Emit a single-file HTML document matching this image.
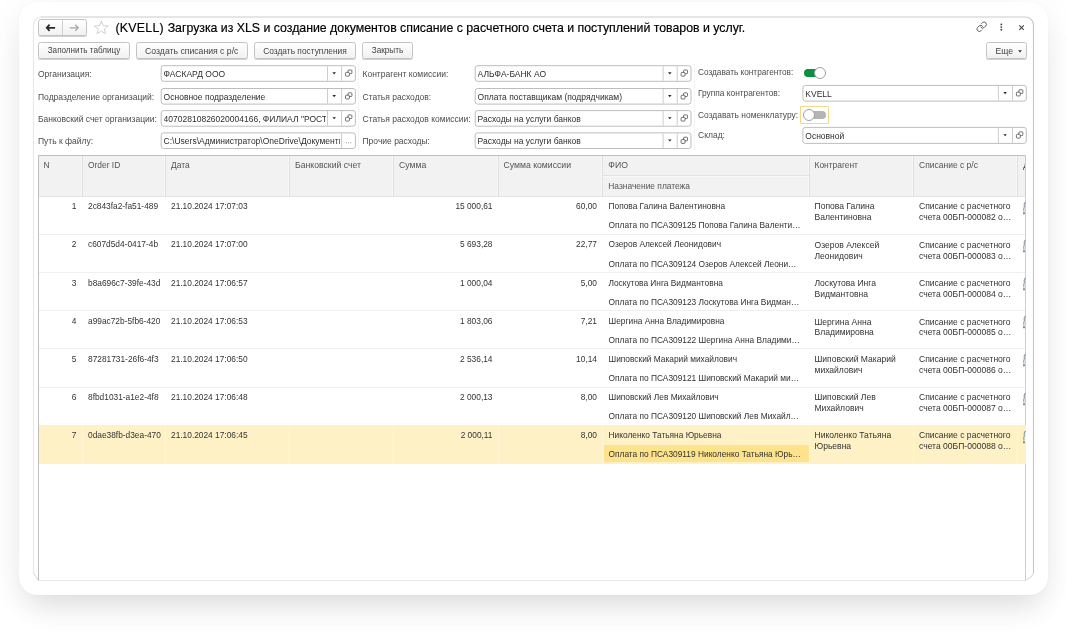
<!DOCTYPE html>
<html lang="ru"><head><meta charset="utf-8"><title>(KVELL) Загрузка из XLS</title>
<style>
html,body{margin:0;padding:0;background:#fff;}
body{width:1067px;height:631px;position:relative;overflow:hidden;font-family:"Liberation Sans",sans-serif;font-size:8.5px;color:#3a3a3a;}
#card{position:absolute;left:19px;top:1.5px;width:1029px;height:593.5px;border-radius:18px;background:#fff;box-shadow:0 19px 30px -9px rgba(0,0,0,0.10),0 6px 36px rgba(0,0,0,0.06),0 0 1.5px rgba(0,0,0,0.06);}
.t{position:absolute;white-space:nowrap;line-height:10px;height:10px;}
.lbl{color:#4c4c4c;}
.val{color:#2e2e2e;}
.btn{position:absolute;box-sizing:border-box;border:1px solid #c3c3c3;border-radius:2.5px;background:linear-gradient(#ffffff,#f1f1f1);box-shadow:0 1px 0.5px rgba(0,0,0,0.18);text-align:center;color:#444;line-height:16.4px;white-space:nowrap;font-size:8.45px;}
.dd{position:absolute;width:4px;height:3px;}
.hd{position:absolute;background:#f2f2f2;}
.hl{position:absolute;background:#dedede;}
.rl{position:absolute;left:39px;width:986px;height:1px;background:#efefef;}
.c{position:absolute;white-space:nowrap;line-height:10px;color:#333;font-size:8.35px;}
.h{position:absolute;white-space:nowrap;line-height:10px;color:#555;font-size:8.42px;}
.r{text-align:right;}
.w{font-size:8.55px;}
</style></head><body>
<div id="card"></div>
<svg style="position:absolute;left:0;top:0;" width="1067" height="631" viewBox="0 0 1067 631"><g fill="none">
<path d="M33.5 573 V25 a8 8 0 0 1 8 -8" stroke="#e8e8e8" stroke-width="1.2"/>
<path d="M41 17 H1025.5" stroke="#dddddd" stroke-width="1.6"/>
<path d="M1025.5 17 a8 8 0 0 1 8 8 V573" stroke="#c6c6c6" stroke-width="1.1"/>
<path d="M33.5 573 L38 580" stroke="#d8d8d8" stroke-width="1"/>
<path d="M1033.5 573 Q1032.5 577 1026.5 580" stroke="#d4d4d4" stroke-width="1"/>
</g></svg>
<div id="layer" style="position:absolute;left:0;top:0;width:1067px;height:631px;will-change:transform;filter:blur(0.35px);">

<div class="btn" style="left:38px;top:19px;width:49px;height:17px;"></div>
<div style="position:absolute;left:62px;top:20px;width:1px;height:15px;background:#d0d0d0;"></div>
<svg style="position:absolute;left:45px;top:23px;" width="12" height="10" viewBox="0 0 12 10"><path d="M4.6 1.7 L1.7 4.8 L4.6 7.9 M2 4.8 H10.1" fill="none" stroke="#2a2a2a" stroke-width="1.7"/></svg>
<svg style="position:absolute;left:68px;top:23px;" width="12" height="10" viewBox="0 0 12 10"><path d="M7.3 1.8 L10.2 4.8 L7.3 7.8 M1.6 4.8 H10" fill="none" stroke="#a8a8a8" stroke-width="1.3"/></svg>
<svg style="position:absolute;left:93px;top:20px;" width="17" height="15" viewBox="0 0 17 15"><path d="M8.3 1.2 L10.1 5.6 L15.2 6 L11.3 9.1 L12.6 13.7 L8.3 11.2 L4 13.7 L5.3 9.1 L1.4 6 L6.5 5.6 Z" fill="#fff" stroke="#c4c4c4" stroke-width="0.8" stroke-linejoin="miter"/></svg>
<div class="t" style="left:115.5px;top:21px;font-size:12.35px;line-height:15px;height:15px;color:#000;-webkit-text-stroke:0.18px #000;letter-spacing:-0.018px;"><span style="position:static;letter-spacing:0.26px;">(KVELL) </span>Загрузка из XLS и создание документов списание с расчетного счета и поступлений товаров и услуг.</div>
<svg style="position:absolute;left:975.9px;top:21.4px;" width="11.4" height="11.4" viewBox="0 0 24 24"><g fill="none" stroke="#505050" stroke-width="1.9" stroke-linecap="round" stroke-linejoin="round"><path d="M10 13a5 5 0 0 0 7.54.54l3-3a5 5 0 0 0-7.07-7.07l-1.72 1.71"/><path d="M14 11a5 5 0 0 0-7.54-.54l-3 3a5 5 0 0 0 7.07 7.07l1.71-1.71"/></g></svg>
<svg style="position:absolute;left:999px;top:22px;" width="5" height="10" viewBox="0 0 5 10"><g fill="#484848"><circle cx="2.3" cy="2.4" r="0.95"/><circle cx="2.3" cy="5.1" r="0.95"/><circle cx="2.3" cy="7.8" r="0.95"/></g></svg>
<svg style="position:absolute;left:1018px;top:23.6px;" width="7" height="7" viewBox="0 0 7 7"><path d="M1.3 1.3 L5.8 5.8 M5.8 1.3 L1.3 5.8" stroke="#444" stroke-width="1.1" fill="none"/></svg>
<div class="btn" style="left:38px;top:42px;width:92px;height:17px;font-size:8.15px;">Заполнить таблицу</div>
<div class="btn" style="left:136px;top:42px;width:111.5px;height:17px;font-size:8.66px;">Создать списания с р/с</div>
<div class="btn" style="left:254px;top:42px;width:102px;height:17px;font-size:8.4px;">Создать поступления</div>
<div class="btn" style="left:362px;top:42px;width:51px;height:17px;font-size:8.2px;">Закрыть</div>
<div class="btn" style="left:986px;top:42px;width:40.5px;height:17px;text-align:left;padding-left:8.5px;font-size:8.64px;">Еще</div>
<svg class="dd" style="left:1017.8px;top:50px;" viewBox="0 0 4 3"><path d="M0.1 0.2 H3.9 L2 2.4 Z" fill="#2a2a2a"/></svg>
<div class="t lbl" style="left:38px;top:68.70px;">Организация:</div>
<svg style="position:absolute;left:159px;top:63px;" width="200" height="22" viewBox="0 0 200 22"><rect x="2.20" y="2.70" width="194.20" height="15.60" rx="2.4" fill="#fff" stroke="#bdbdbd" stroke-width="1"/><path d="M168.50 3.20 V17.80 M182.60 3.20 V17.80" stroke="#cdcdcd" stroke-width="1" fill="none"/><path d="M173.40 9.30 H177.00 L175.20 11.40 Z" fill="#2a2a2a"/><g fill="#fff" stroke="#4a4a4a" stroke-width="0.78"><rect x="189.00" y="7.00" width="3.9" height="3.7" rx="0.8"/><rect x="186.50" y="9.40" width="3.9" height="3.8" rx="0.9"/></g></svg>
<div class="t val" style="left:163.60px;top:68.80px;width:162.6px;overflow:hidden;font-size:8.5px;">ФАСКАРД ООО</div>
<div class="t lbl" style="left:362.5px;top:68.70px;">Контрагент комиссии:</div>
<svg style="position:absolute;left:473px;top:63px;" width="222" height="22" viewBox="0 0 222 22"><rect x="2.20" y="2.70" width="215.80" height="15.60" rx="2.4" fill="#fff" stroke="#bdbdbd" stroke-width="1"/><path d="M190.10 3.20 V17.80 M204.20 3.20 V17.80" stroke="#cdcdcd" stroke-width="1" fill="none"/><path d="M195.00 9.30 H198.60 L196.80 11.40 Z" fill="#2a2a2a"/><g fill="#fff" stroke="#4a4a4a" stroke-width="0.78"><rect x="210.60" y="7.00" width="3.9" height="3.7" rx="0.8"/><rect x="208.10" y="9.40" width="3.9" height="3.8" rx="0.9"/></g></svg>
<div class="t val" style="left:477.60px;top:68.80px;width:184.2px;overflow:hidden;font-size:8.5px;">АЛЬФА-БАНК АО</div>
<div class="t lbl" style="left:38px;top:91.50px;">Подразделение организаций:</div>
<svg style="position:absolute;left:159px;top:86px;" width="200" height="22" viewBox="0 0 200 22"><rect x="2.20" y="2.50" width="194.20" height="15.60" rx="2.4" fill="#fff" stroke="#bdbdbd" stroke-width="1"/><path d="M168.50 3.00 V17.60 M182.60 3.00 V17.60" stroke="#cdcdcd" stroke-width="1" fill="none"/><path d="M173.40 9.10 H177.00 L175.20 11.20 Z" fill="#2a2a2a"/><g fill="#fff" stroke="#4a4a4a" stroke-width="0.78"><rect x="189.00" y="6.80" width="3.9" height="3.7" rx="0.8"/><rect x="186.50" y="9.20" width="3.9" height="3.8" rx="0.9"/></g></svg>
<div class="t val" style="left:163.60px;top:91.60px;width:162.6px;overflow:hidden;font-size:8.5px;">Основное подразделение</div>
<div class="t lbl" style="left:362.5px;top:91.50px;">Статья расходов:</div>
<svg style="position:absolute;left:473px;top:86px;" width="222" height="22" viewBox="0 0 222 22"><rect x="2.20" y="2.50" width="215.80" height="15.60" rx="2.4" fill="#fff" stroke="#bdbdbd" stroke-width="1"/><path d="M190.10 3.00 V17.60 M204.20 3.00 V17.60" stroke="#cdcdcd" stroke-width="1" fill="none"/><path d="M195.00 9.10 H198.60 L196.80 11.20 Z" fill="#2a2a2a"/><g fill="#fff" stroke="#4a4a4a" stroke-width="0.78"><rect x="210.60" y="6.80" width="3.9" height="3.7" rx="0.8"/><rect x="208.10" y="9.20" width="3.9" height="3.8" rx="0.9"/></g></svg>
<div class="t val" style="left:477.60px;top:91.60px;width:184.2px;overflow:hidden;font-size:8.5px;">Оплата поставщикам (подрядчикам)</div>
<div class="t lbl" style="left:38px;top:113.60px;">Банковский счет организации:</div>
<svg style="position:absolute;left:159px;top:108px;" width="200" height="22" viewBox="0 0 200 22"><rect x="2.20" y="2.60" width="194.20" height="15.60" rx="2.4" fill="#fff" stroke="#bdbdbd" stroke-width="1"/><path d="M168.50 3.10 V17.70 M182.60 3.10 V17.70" stroke="#cdcdcd" stroke-width="1" fill="none"/><path d="M173.40 9.20 H177.00 L175.20 11.30 Z" fill="#2a2a2a"/><g fill="#fff" stroke="#4a4a4a" stroke-width="0.78"><rect x="189.00" y="6.90" width="3.9" height="3.7" rx="0.8"/><rect x="186.50" y="9.30" width="3.9" height="3.8" rx="0.9"/></g></svg>
<div class="t val" style="left:163.60px;top:113.70px;width:162.6px;overflow:hidden;font-size:8.5px;">40702810826020004166, ФИЛИАЛ "РОСТ</div>
<div class="t lbl" style="left:362.5px;top:113.60px;">Статья расходов комиссии:</div>
<svg style="position:absolute;left:473px;top:108px;" width="222" height="22" viewBox="0 0 222 22"><rect x="2.20" y="2.60" width="215.80" height="15.60" rx="2.4" fill="#fff" stroke="#bdbdbd" stroke-width="1"/><path d="M190.10 3.10 V17.70 M204.20 3.10 V17.70" stroke="#cdcdcd" stroke-width="1" fill="none"/><path d="M195.00 9.20 H198.60 L196.80 11.30 Z" fill="#2a2a2a"/><g fill="#fff" stroke="#4a4a4a" stroke-width="0.78"><rect x="210.60" y="6.90" width="3.9" height="3.7" rx="0.8"/><rect x="208.10" y="9.30" width="3.9" height="3.8" rx="0.9"/></g></svg>
<div class="t val" style="left:477.60px;top:113.70px;width:184.2px;overflow:hidden;font-size:8.5px;">Расходы на услуги банков</div>
<div class="t lbl" style="left:38px;top:135.90px;">Путь к файлу:</div>
<svg style="position:absolute;left:159px;top:130px;" width="200" height="22" viewBox="0 0 200 22"><rect x="2.20" y="2.90" width="194.20" height="15.60" rx="2.4" fill="#fff" stroke="#bdbdbd" stroke-width="1"/><path d="M182.60 3.40 V18.00" stroke="#cdcdcd" stroke-width="1" fill="none"/><g fill="#8c8c8c"><circle cx="187.30" cy="12.80" r="0.55"/><circle cx="189.50" cy="12.80" r="0.55"/><circle cx="191.70" cy="12.80" r="0.55"/></g></svg>
<div class="t val" style="left:163.60px;top:136.00px;width:176.8px;overflow:hidden;font-size:8.5px;">C:\Users\Администратор\OneDrive\Документы</div>
<div class="t lbl" style="left:362.5px;top:135.90px;">Прочие расходы:</div>
<svg style="position:absolute;left:473px;top:130px;" width="222" height="22" viewBox="0 0 222 22"><rect x="2.20" y="2.90" width="215.80" height="15.60" rx="2.4" fill="#fff" stroke="#bdbdbd" stroke-width="1"/><path d="M190.10 3.40 V18.00 M204.20 3.40 V18.00" stroke="#cdcdcd" stroke-width="1" fill="none"/><path d="M195.00 9.50 H198.60 L196.80 11.60 Z" fill="#2a2a2a"/><g fill="#fff" stroke="#4a4a4a" stroke-width="0.78"><rect x="210.60" y="7.20" width="3.9" height="3.7" rx="0.8"/><rect x="208.10" y="9.60" width="3.9" height="3.8" rx="0.9"/></g></svg>
<div class="t val" style="left:477.60px;top:136.00px;width:184.2px;overflow:hidden;font-size:8.5px;">Расходы на услуги банков</div>
<div style="position:absolute;left:358px;top:64px;width:0;height:86px;border-left:1px dotted #ebebeb;"></div>
<div style="position:absolute;left:694px;top:64px;width:0;height:86px;border-left:1px dotted #ebebeb;"></div>
<div class="t lbl" style="left:698px;top:68px;font-size:8.25px;">Создавать контрагентов:</div>
<div class="t lbl" style="left:698px;top:88.4px;font-size:8.35px;">Группа контрагентов:</div>
<div class="t lbl" style="left:698px;top:109.7px;font-size:8.42px;">Создавать номенклатуру:</div>
<div class="t lbl" style="left:698px;top:130.4px;font-size:8.5px;">Склад:</div>
<svg style="position:absolute;left:800px;top:83px;" width="230" height="22" viewBox="0 0 230 22"><rect x="2.90" y="2.40" width="223.40" height="15.70" rx="2.4" fill="#fff" stroke="#bdbdbd" stroke-width="1"/><path d="M198.40 2.90 V17.60 M212.50 2.90 V17.60" stroke="#cdcdcd" stroke-width="1" fill="none"/><path d="M203.30 9.05 H206.90 L205.10 11.15 Z" fill="#2a2a2a"/><g fill="#fff" stroke="#4a4a4a" stroke-width="0.78"><rect x="218.90" y="6.75" width="3.9" height="3.7" rx="0.8"/><rect x="216.40" y="9.15" width="3.9" height="3.8" rx="0.9"/></g></svg>
<div class="t val" style="left:805.30px;top:88.55px;width:191.8px;overflow:hidden;font-size:8.5px;">KVELL</div>
<svg style="position:absolute;left:800px;top:125px;" width="230" height="22" viewBox="0 0 230 22"><rect x="2.90" y="2.40" width="223.40" height="16.00" rx="2.4" fill="#fff" stroke="#bdbdbd" stroke-width="1"/><path d="M198.40 2.90 V17.90 M212.50 2.90 V17.90" stroke="#cdcdcd" stroke-width="1" fill="none"/><path d="M203.30 9.20 H206.90 L205.10 11.30 Z" fill="#2a2a2a"/><g fill="#fff" stroke="#4a4a4a" stroke-width="0.78"><rect x="218.90" y="6.90" width="3.9" height="3.7" rx="0.8"/><rect x="216.40" y="9.30" width="3.9" height="3.8" rx="0.9"/></g></svg>
<div class="t val" style="left:805.30px;top:130.70px;width:191.8px;overflow:hidden;font-size:8.5px;">Основной</div>
<div style="position:absolute;left:803.5px;top:69px;width:20px;height:8.2px;border-radius:5px;background:#0d8f42;"></div>
<div style="position:absolute;left:814.3px;top:66.8px;width:12.2px;height:12.2px;box-sizing:border-box;border-radius:7px;background:#fff;border:1px solid #a0a0a0;"></div>
<div style="position:absolute;left:800px;top:106px;width:29px;height:18px;box-sizing:border-box;border:1px solid #f3d983;border-radius:1px;"></div>
<div style="position:absolute;left:806px;top:111px;width:19.5px;height:8.2px;border-radius:5px;background:#b4b4b4;"></div>
<div style="position:absolute;left:802.7px;top:108.8px;width:12.2px;height:12.2px;box-sizing:border-box;border-radius:7px;background:#fff;border:1px solid #a0a0a0;"></div>
<div style="position:absolute;left:38px;top:155px;width:988px;height:426px;box-sizing:border-box;border:1px solid #c0c0c0;border-left-color:#bebebe;border-right-color:#cdcdcd;border-bottom-color:#e6e6e6;background:#fff;"></div>
<div class="hd" style="left:39px;top:156px;width:986px;height:39.5px;"></div>
<div class="hl" style="left:82px;top:156px;width:1px;height:39.5px;background:#e0e0e0;"></div><div class="hl" style="left:81px;top:156px;width:1px;height:39.5px;background:#f7f7f7;"></div>
<div class="hl" style="left:165px;top:156px;width:1px;height:39.5px;background:#e0e0e0;"></div><div class="hl" style="left:164px;top:156px;width:1px;height:39.5px;background:#f7f7f7;"></div>
<div class="hl" style="left:289px;top:156px;width:1px;height:39.5px;background:#e0e0e0;"></div><div class="hl" style="left:288px;top:156px;width:1px;height:39.5px;background:#f7f7f7;"></div>
<div class="hl" style="left:393px;top:156px;width:1px;height:39.5px;background:#e0e0e0;"></div><div class="hl" style="left:392px;top:156px;width:1px;height:39.5px;background:#f7f7f7;"></div>
<div class="hl" style="left:498px;top:156px;width:1px;height:39.5px;background:#e0e0e0;"></div><div class="hl" style="left:497px;top:156px;width:1px;height:39.5px;background:#f7f7f7;"></div>
<div class="hl" style="left:602px;top:156px;width:1px;height:39.5px;background:#e0e0e0;"></div><div class="hl" style="left:601px;top:156px;width:1px;height:39.5px;background:#f7f7f7;"></div>
<div class="hl" style="left:809px;top:156px;width:1px;height:39.5px;background:#e0e0e0;"></div><div class="hl" style="left:808px;top:156px;width:1px;height:39.5px;background:#f7f7f7;"></div>
<div class="hl" style="left:913px;top:156px;width:1px;height:39.5px;background:#e0e0e0;"></div><div class="hl" style="left:912px;top:156px;width:1px;height:39.5px;background:#f7f7f7;"></div>
<div class="hl" style="left:1017px;top:156px;width:1px;height:39.5px;background:#e0e0e0;"></div><div class="hl" style="left:1016px;top:156px;width:1px;height:39.5px;background:#f7f7f7;"></div>
<div class="hl" style="left:602px;top:175px;width:207px;height:1px;background:#e2e2e2;"></div><div class="hl" style="left:603px;top:176px;width:206px;height:1px;background:#f8f8f8;"></div>
<div class="hl" style="left:38.5px;top:195.5px;width:987px;height:1px;background:#e4e4e4;"></div>
<div class="h" style="left:43.5px;top:160.4px;font-size:8.42px;">N</div>
<div class="h" style="left:88px;top:160.4px;font-size:8.42px;">Order ID</div>
<div class="h" style="left:171px;top:160.4px;font-size:8.42px;">Дата</div>
<div class="h" style="left:295px;top:160.4px;font-size:8.68px;">Банковский счет</div>
<div class="h" style="left:399px;top:160.4px;font-size:8.68px;">Сумма</div>
<div class="h" style="left:503.5px;top:160.4px;font-size:8.68px;">Сумма комиссии</div>
<div class="h" style="left:608.3px;top:160.4px;font-size:8.7px;">ФИО</div>
<div class="h" style="left:814.5px;top:160.4px;font-size:8.42px;">Контрагент</div>
<div class="h" style="left:919px;top:160.4px;font-size:8.5px;">Списание с р/с</div>
<div class="h" style="left:608.3px;top:180.5px;">Назначение платежа</div>
<div class="h" style="left:1023.2px;top:160.4px;width:2.3px;overflow:hidden;color:#444;">Д</div>
<div class="c r" style="left:40px;width:36.5px;top:201.0px;">1</div>
<div class="c" style="left:88px;top:201.0px;">2c843fa2-fa51-489</div>
<div class="c" style="left:171px;top:201.0px;">21.10.2024 17:07:03</div>
<div class="c r" style="left:400px;width:92.5px;top:201.0px;">15 000,61</div>
<div class="c r" style="left:500px;width:97px;top:201.0px;">60,00</div>
<div class="c" style="left:608.5px;top:201.0px;">Попова Галина Валентиновна</div>
<div class="c" style="left:608.5px;top:220.2px;">Оплата по ПСА309125 Попова Галина Валенти…</div>
<div class="c w" style="left:814.5px;top:201.3px;">Попова Галина</div>
<div class="c w" style="left:814.5px;top:212.2px;">Валентиновна</div>
<div class="c w" style="left:919px;top:201.3px;">Списание с расчетного</div>
<div class="c w" style="left:919px;top:212.2px;">счета 00БП-000082 о…</div>
<svg style="position:absolute;left:1022px;top:200.8px;" width="4" height="15" viewBox="0 0 4 15"><path d="M3.6 1 Q1.6 2.5 2.4 5.5 Q1.2 8 2 10.5" fill="none" stroke="#8f9dab" stroke-width="1.1"/><path d="M2 11.3 V13.2" stroke="#444" stroke-width="1.2"/></svg>
<div class="rl" style="top:233.94px;"></div>
<div class="c r" style="left:40px;width:36.5px;top:239.44px;">2</div>
<div class="c" style="left:88px;top:239.44px;">c607d5d4-0417-4b</div>
<div class="c" style="left:171px;top:239.44px;">21.10.2024 17:07:00</div>
<div class="c r" style="left:400px;width:92.5px;top:239.44px;">5 693,28</div>
<div class="c r" style="left:500px;width:97px;top:239.44px;">22,77</div>
<div class="c" style="left:608.5px;top:239.44px;">Озеров Алексей Леонидович</div>
<div class="c" style="left:608.5px;top:258.64px;">Оплата по ПСА309124 Озеров Алексей Леони…</div>
<div class="c w" style="left:814.5px;top:239.74px;">Озеров Алексей</div>
<div class="c w" style="left:814.5px;top:250.64px;">Леонидович</div>
<div class="c w" style="left:919px;top:239.74px;">Списание с расчетного</div>
<div class="c w" style="left:919px;top:250.64px;">счета 00БП-000083 о…</div>
<svg style="position:absolute;left:1022px;top:238.94px;" width="4" height="15" viewBox="0 0 4 15"><path d="M3.6 1 Q1.6 2.5 2.4 5.5 Q1.2 8 2 10.5" fill="none" stroke="#8f9dab" stroke-width="1.1"/><path d="M2 11.3 V13.2" stroke="#444" stroke-width="1.2"/></svg>
<div class="rl" style="top:272.08000000000004px;"></div>
<div class="c r" style="left:40px;width:36.5px;top:277.78000000000003px;">3</div>
<div class="c" style="left:88px;top:277.78000000000003px;">b8a696c7-39fe-43d</div>
<div class="c" style="left:171px;top:277.78000000000003px;">21.10.2024 17:06:57</div>
<div class="c r" style="left:400px;width:92.5px;top:277.78000000000003px;">1 000,04</div>
<div class="c r" style="left:500px;width:97px;top:277.78000000000003px;">5,00</div>
<div class="c" style="left:608.5px;top:277.78000000000003px;">Лоскутова Инга Видмантовна</div>
<div class="c" style="left:608.5px;top:296.98px;">Оплата по ПСА309123 Лоскутова Инга Видман…</div>
<div class="c w" style="left:814.5px;top:278.08000000000004px;">Лоскутова Инга</div>
<div class="c w" style="left:814.5px;top:288.98px;">Видмантовна</div>
<div class="c w" style="left:919px;top:278.08000000000004px;">Списание с расчетного</div>
<div class="c w" style="left:919px;top:288.98px;">счета 00БП-000084 о…</div>
<svg style="position:absolute;left:1022px;top:277.08000000000004px;" width="4" height="15" viewBox="0 0 4 15"><path d="M3.6 1 Q1.6 2.5 2.4 5.5 Q1.2 8 2 10.5" fill="none" stroke="#8f9dab" stroke-width="1.1"/><path d="M2 11.3 V13.2" stroke="#444" stroke-width="1.2"/></svg>
<div class="rl" style="top:310.22px;"></div>
<div class="c r" style="left:40px;width:36.5px;top:316.22px;">4</div>
<div class="c" style="left:88px;top:316.22px;">a99ac72b-5fb6-420</div>
<div class="c" style="left:171px;top:316.22px;">21.10.2024 17:06:53</div>
<div class="c r" style="left:400px;width:92.5px;top:316.22px;">1 803,06</div>
<div class="c r" style="left:500px;width:97px;top:316.22px;">7,21</div>
<div class="c" style="left:608.5px;top:316.22px;">Шергина Анна Владимировна</div>
<div class="c" style="left:608.5px;top:335.42px;">Оплата по ПСА309122 Шергина Анна Владими…</div>
<div class="c w" style="left:814.5px;top:316.52000000000004px;">Шергина Анна</div>
<div class="c w" style="left:814.5px;top:327.42px;">Владимировна</div>
<div class="c w" style="left:919px;top:316.52000000000004px;">Списание с расчетного</div>
<div class="c w" style="left:919px;top:327.42px;">счета 00БП-000085 о…</div>
<svg style="position:absolute;left:1022px;top:315.22px;" width="4" height="15" viewBox="0 0 4 15"><path d="M3.6 1 Q1.6 2.5 2.4 5.5 Q1.2 8 2 10.5" fill="none" stroke="#8f9dab" stroke-width="1.1"/><path d="M2 11.3 V13.2" stroke="#444" stroke-width="1.2"/></svg>
<div class="rl" style="top:348.36px;"></div>
<div class="c r" style="left:40px;width:36.5px;top:353.76px;">5</div>
<div class="c" style="left:88px;top:353.76px;">87281731-26f6-4f3</div>
<div class="c" style="left:171px;top:353.76px;">21.10.2024 17:06:50</div>
<div class="c r" style="left:400px;width:92.5px;top:353.76px;">2 536,14</div>
<div class="c r" style="left:500px;width:97px;top:353.76px;">10,14</div>
<div class="c" style="left:608.5px;top:353.76px;">Шиповский Макарий михайлович</div>
<div class="c" style="left:608.5px;top:372.96px;">Оплата по ПСА309121 Шиповский Макарий ми…</div>
<div class="c w" style="left:814.5px;top:354.06px;">Шиповский Макарий</div>
<div class="c w" style="left:814.5px;top:364.96px;">михайлович</div>
<div class="c w" style="left:919px;top:354.06px;">Списание с расчетного</div>
<div class="c w" style="left:919px;top:364.96px;">счета 00БП-000086 о…</div>
<svg style="position:absolute;left:1022px;top:353.36px;" width="4" height="15" viewBox="0 0 4 15"><path d="M3.6 1 Q1.6 2.5 2.4 5.5 Q1.2 8 2 10.5" fill="none" stroke="#8f9dab" stroke-width="1.1"/><path d="M2 11.3 V13.2" stroke="#444" stroke-width="1.2"/></svg>
<div class="rl" style="top:386.5px;"></div>
<div class="c r" style="left:40px;width:36.5px;top:391.7px;">6</div>
<div class="c" style="left:88px;top:391.7px;">8fbd1031-a1e2-4f8</div>
<div class="c" style="left:171px;top:391.7px;">21.10.2024 17:06:48</div>
<div class="c r" style="left:400px;width:92.5px;top:391.7px;">2 000,13</div>
<div class="c r" style="left:500px;width:97px;top:391.7px;">8,00</div>
<div class="c" style="left:608.5px;top:391.7px;">Шиповский Лев Михайлович</div>
<div class="c" style="left:608.5px;top:410.9px;">Оплата по ПСА309120 Шиповский Лев Михайл…</div>
<div class="c w" style="left:814.5px;top:392.0px;">Шиповский Лев</div>
<div class="c w" style="left:814.5px;top:402.9px;">Михайлович</div>
<div class="c w" style="left:919px;top:392.0px;">Списание с расчетного</div>
<div class="c w" style="left:919px;top:402.9px;">счета 00БП-000087 о…</div>
<svg style="position:absolute;left:1022px;top:391.5px;" width="4" height="15" viewBox="0 0 4 15"><path d="M3.6 1 Q1.6 2.5 2.4 5.5 Q1.2 8 2 10.5" fill="none" stroke="#8f9dab" stroke-width="1.1"/><path d="M2 11.3 V13.2" stroke="#444" stroke-width="1.2"/></svg>
<div style="position:absolute;left:38.5px;top:425.14px;width:987px;height:39.14px;background:#fef1c6;"></div>
<div style="position:absolute;left:82px;top:425.14px;width:1px;height:39.14px;background:#fef5d8;"></div>
<div style="position:absolute;left:165px;top:425.14px;width:1px;height:39.14px;background:#fef5d8;"></div>
<div style="position:absolute;left:289px;top:425.14px;width:1px;height:39.14px;background:#fef5d8;"></div>
<div style="position:absolute;left:393px;top:425.14px;width:1px;height:39.14px;background:#fef5d8;"></div>
<div style="position:absolute;left:498px;top:425.14px;width:1px;height:39.14px;background:#fef5d8;"></div>
<div style="position:absolute;left:602px;top:425.14px;width:1px;height:39.14px;background:#fef5d8;"></div>
<div style="position:absolute;left:809px;top:425.14px;width:1px;height:39.14px;background:#fef5d8;"></div>
<div style="position:absolute;left:913px;top:425.14px;width:1px;height:39.14px;background:#fef5d8;"></div>
<div style="position:absolute;left:1017px;top:425.14px;width:1px;height:39.14px;background:#fef5d8;"></div>
<div style="position:absolute;left:603.5px;top:445.14px;width:205.5px;height:17.14px;background:#fde38b;"></div>
<div class="rl" style="top:424.64px;"></div>
<div class="c r" style="left:40px;width:36.5px;top:429.84px;">7</div>
<div class="c" style="left:88px;top:429.84px;">0dae38fb-d3ea-470</div>
<div class="c" style="left:171px;top:429.84px;">21.10.2024 17:06:45</div>
<div class="c r" style="left:400px;width:92.5px;top:429.84px;">2 000,11</div>
<div class="c r" style="left:500px;width:97px;top:429.84px;">8,00</div>
<div class="c" style="left:608.5px;top:429.84px;">Николенко Татьяна Юрьевна</div>
<div class="c" style="left:608.5px;top:449.03999999999996px;">Оплата по ПСА309119 Николенко Татьяна Юрь…</div>
<div class="c w" style="left:814.5px;top:430.14px;">Николенко Татьяна</div>
<div class="c w" style="left:814.5px;top:441.03999999999996px;">Юрьевна</div>
<div class="c w" style="left:919px;top:430.14px;">Списание с расчетного</div>
<div class="c w" style="left:919px;top:441.03999999999996px;">счета 00БП-000088 о…</div>
<svg style="position:absolute;left:1022px;top:429.64px;" width="4" height="15" viewBox="0 0 4 15"><path d="M3.6 1 Q1.6 2.5 2.4 5.5 Q1.2 8 2 10.5" fill="none" stroke="#8f9dab" stroke-width="1.1"/><path d="M2 11.3 V13.2" stroke="#444" stroke-width="1.2"/></svg>
</div></body></html>
